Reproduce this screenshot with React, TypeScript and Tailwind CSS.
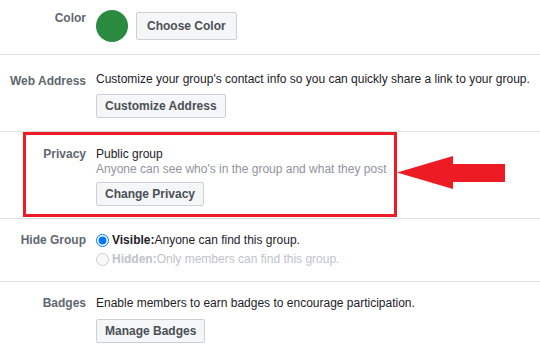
import React from 'react';

const Label = ({ children, className = '' }: { children: React.ReactNode; className?: string }) => (
  <div className={`w-[86px] shrink-0 text-right font-bold text-[#606770] leading-4 ${className}`}>{children}</div>
);

const Btn = ({ children, className = '' }: { children: React.ReactNode; className?: string }) => (
  <button
    type="button"
    className={`h-6 px-[8px] bg-[#f5f6f7] border border-[#ccd0d5] rounded-[2px] font-bold text-[#4b4f56] text-xs leading-none ${className}`}
  >
    {children}
  </button>
);

export default function App() {
  return (
    <div className="relative w-[540px] h-[354px] bg-white overflow-hidden text-xs text-[#1d2129] font-['Liberation_Sans',Arial,sans-serif]">
      {/* Color */}
      <div className="flex gap-[10px] h-[55px] pt-[10px] border-b border-[#dddfe2]">
        <Label>Color</Label>
        <div className="flex items-center gap-2 h-8">
          <div className="w-8 h-8 rounded-full bg-[#2a8a40]" />
          <Btn className="h-[28px] px-[10px]">Choose Color</Btn>
        </div>
      </div>

      {/* Web Address */}
      <div className="flex gap-[10px] h-[77px] pt-[16px] border-b border-[#dddfe2]">
        <Label className="pt-[2px]">Web Address</Label>
        <div>
          <div className="leading-4">Customize your group's contact info so you can quickly share a link to your group.</div>
          <Btn className="mt-[7px]">Customize Address</Btn>
        </div>
      </div>

      {/* Privacy */}
      <div className="flex gap-[10px] h-[87px] pt-[15px] border-b border-[#dddfe2]">
        <Label className="leading-[15px]">Privacy</Label>
        <div>
          <div className="leading-[15px]">Public group</div>
          <div className="leading-[15px] text-[#90949c]">Anyone can see who's in the group and what they post</div>
          <Btn className="mt-[5px]">Change Privacy</Btn>
        </div>
      </div>

      {/* Hide Group */}
      <div className="flex gap-[10px] h-[63px] pt-[13px] border-b border-[#dddfe2]">
        <Label>Hide Group</Label>
        <div>
          <label className="flex items-center h-4 leading-4">
            <input type="radio" name="hide" defaultChecked className="m-0 mr-[3px] w-[13px] h-[13px]" />
            <span className="font-bold">Visible:</span>
            <span>Anyone can find this group.</span>
          </label>
          <label className="flex items-center h-4 leading-4 mt-[3px] text-[#bec3c9]">
            <input type="radio" name="hide" disabled className="m-0 mr-[3px] w-[13px] h-[13px]" />
            <span className="font-bold">Hidden:</span>
            <span>Only members can find this group.</span>
          </label>
        </div>
      </div>

      {/* Badges */}
      <div className="flex gap-[10px] pt-[13px]">
        <Label>Badges</Label>
        <div>
          <div className="leading-4">Enable members to earn badges to encourage participation.</div>
          <Btn className="mt-[8px]">Manage Badges</Btn>
        </div>
      </div>

      {/* annotation overlay */}
      <div className="absolute left-[23px] top-[132px] w-[374px] h-[85px] border-[3px] border-[#ed1c24] pointer-events-none" />
      <svg className="absolute left-[397px] top-[156px]" width="109" height="34" viewBox="0 0 109 34">
        <polygon points="0,16.5 56,0 56,8 108,8 108,26 56,26 56,33" fill="#ed1c24" />
      </svg>
    </div>
  );
}
